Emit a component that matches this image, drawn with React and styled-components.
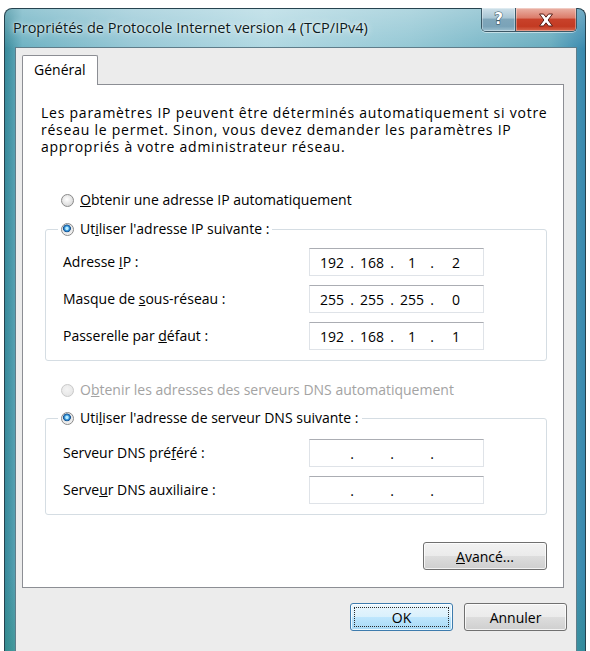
import React from "react";
import styled, { createGlobalStyle } from "styled-components";

const GlobalStyle = createGlobalStyle`
  html, body {
    margin: 0;
    padding: 0;
    background: #ffffff;
  }
  body {
    font-family: "Open Sans", "Noto Sans", sans-serif;
    font-size: 14px;
    color: #000;
  }
`;

const Page = styled.div`
  width: 590px;
  height: 651px;
  box-sizing: border-box;
  padding: 8px 0 0 4px;
  overflow: hidden;
`;

const Window = styled.div`
  width: 582px;
  height: 643px;
  box-sizing: border-box;
  border: 1px solid #26434f;
  border-bottom: none;
  border-radius: 8px 8px 0 0;
  padding: 0 8px 0 10px;
  display: flex;
  flex-direction: column;
  background:
    linear-gradient(180deg, rgba(255, 255, 255, 0.28) 0px, rgba(255, 255, 255, 0.05) 34px, rgba(255, 255, 255, 0) 40px),
    linear-gradient(180deg, rgba(0, 0, 0, 0) 88%, rgba(40, 140, 120, 0.35) 100%),
    linear-gradient(90deg, #388a9b 0%, #6cb1c2 3%, #95c7d5 22%, #b0d8e2 45%, #93c7d4 70%, #66abbe 94%, #3889ae 100%);
`;

const TitleBar = styled.div`
  height: 38px;
  flex: none;
  display: flex;
  justify-content: space-between;
  align-items: flex-start;
`;

const Title = styled.div`
  margin: 9px 0 0 -2px;
  font-size: 14.5px;
  line-height: 19px;
  color: #0b1a20;
  text-shadow: 0 0 6px rgba(255, 255, 255, 0.9), 0 0 2px rgba(255, 255, 255, 0.8);
`;

const CaptionGroup = styled.div`
  display: flex;
  margin-top: -1px;
  height: 23px;
  border: 1px solid #3b5866;
  border-top: none;
  border-radius: 0 0 5px 5px;
  overflow: hidden;
  box-shadow: 0 1px 0 rgba(255, 255, 255, 0.5);
`;

const CaptionButton = styled.div`
  width: ${(p) => p.$w}px;
  display: flex;
  align-items: center;
  justify-content: center;
  box-shadow: inset 0 0 0 1px rgba(255, 255, 255, 0.35);
  background: ${(p) =>
    p.$close
      ? "linear-gradient(180deg, #eab2a6 0%, #dc7d6b 42%, #c8412a 50%, #c33a22 80%, #d8664c 100%)"
      : "linear-gradient(180deg, #cfe1ea 0%, #a9c6d4 42%, #7fa6ba 50%, #7aa3b8 80%, #9dc0d0 100%)"};
  & + & {
    border-left: 1px solid #3b5866;
  }
`;

const HelpGlyph = styled.span`
  font-family: "DejaVu Sans", sans-serif;
  font-weight: bold;
  font-size: 15px;
  line-height: 1;
  color: #ffffff;
  -webkit-text-stroke: 1px #2e4a58;
  paint-order: stroke fill;
`;

const Content = styled.div`
  flex: 1;
  box-sizing: border-box;
  background: #ececec;
  border: 1px solid #5f7d8a;
  border-bottom: none;
  padding: 7px 12px 0 6px;
  display: flex;
  flex-direction: column;
`;

const TabStrip = styled.div`
  display: flex;
  position: relative;
  z-index: 1;
  margin-bottom: -1px;
`;

const Tab = styled.div`
  width: 76px;
  height: 30px;
  box-sizing: border-box;
  background: #ffffff;
  border: 1px solid #8c8e94;
  border-bottom: none;
  border-radius: 2px 2px 0 0;
  padding: 5px 0 0 11px;
  font-size: 14px;
  line-height: 18px;
`;

const Panel = styled.div`
  height: 504px;
  box-sizing: border-box;
  background: #ffffff;
  border: 1px solid #8c8e94;
  padding: 19px 16px 0 0;
  display: flex;
  flex-direction: column;
`;

const Intro = styled.p`
  margin: 0 0 0 18px;
  font-size: 14px;
  letter-spacing: 0.76px;
  line-height: 17px;
  white-space: nowrap;
`;

const RadioRow = styled.label`
  display: flex;
  align-items: center;
  gap: 6px;
  height: 20px;
  margin: ${(p) => p.$m || "0"};
  padding: 0 3px;
  line-height: 20px;
  color: ${(p) => (p.$disabled ? "#a3a3a3" : "#000")};
`;

const RadioDot = styled.span`
  width: 13px;
  height: 13px;
  box-sizing: border-box;
  border-radius: 50%;
  flex: none;
  border: 1px solid ${(p) => (p.$disabled ? "#c9c9c9" : "#8a8a8a")};
  background: ${(p) =>
    p.$checked
      ? "radial-gradient(circle at 45% 40%, #b8ecff 0 1.2px, #3a9be0 2.2px, #14508e 3.6px, #e8e8e8 4.2px, #f8f8f8 100%)"
      : p.$disabled
      ? "radial-gradient(circle at 45% 40%, #f4f4f4 0, #e2e2e2 100%)"
      : "radial-gradient(circle at 45% 40%, #ffffff 0, #dcdcdc 70%, #cfcfcf 100%)"};
`;

const Group = styled.fieldset`
  margin: ${(p) => p.$top}px 0 0 22px;
  width: 502px;
  box-sizing: border-box;
  border: 1px solid #d5dde3;
  border-radius: 3px;
  padding: ${(p) => p.$pad};
  min-inline-size: 0;
`;

const Legend = styled.legend`
  margin-left: 12px;
  padding: 0;
`;

const FieldGrid = styled.div`
  display: grid;
  grid-template-columns: 246px 175px;
  row-gap: 9px;
  align-items: center;
  margin-left: 17px;
`;

const FieldLabel = styled.span`
  line-height: 18px;
`;

const IpBox = styled.div`
  height: 28px;
  box-sizing: border-box;
  border: 1px solid #dfe3e8;
  border-top-color: #abadb3;
  background: #ffffff;
  display: flex;
  align-items: center;
  padding-left: 6px;
  font-size: 14px;
`;

const Octet = styled.span`
  width: ${(p) => (p.$last ? 40 : 32)}px;
  text-align: center;
`;

const Dot = styled.span`
  width: 8px;
  text-align: center;
`;

const ButtonRow = styled.div`
  display: flex;
  justify-content: flex-end;
  gap: 11px;
  margin: ${(p) => p.$m};
`;

const Button = styled.div`
  width: ${(p) => p.$w}px;
  height: 28px;
  box-sizing: border-box;
  border: 1px solid ${(p) => (p.$default ? "#3d7bad" : "#707070")};
  border-radius: 3px;
  display: flex;
  align-items: center;
  justify-content: center;
  font-size: 14px;
  background: ${(p) =>
    p.$default
      ? "linear-gradient(180deg, #eaf6fd 0%, #d9f0fc 50%, #bee6fd 51%, #a7d9f5 100%)"
      : "linear-gradient(180deg, #f2f2f2 0%, #ebebeb 50%, #dddddd 51%, #cfcfcf 100%)"};
  box-shadow: inset 0 0 0 1px rgba(255, 255, 255, 0.75);
`;

const FocusRing = styled.span`
  width: calc(100% - 6px);
  height: calc(100% - 6px);
  box-sizing: border-box;
  border: 1px dotted #2a2a2a;
  display: flex;
  align-items: center;
  justify-content: center;
`;

function Ip({ parts }) {
  return (
    <IpBox>
      <Octet>{parts[0]}</Octet>
      <Dot>.</Dot>
      <Octet>{parts[1]}</Octet>
      <Dot>.</Dot>
      <Octet>{parts[2]}</Octet>
      <Dot>.</Dot>
      <Octet $last>{parts[3]}</Octet>
    </IpBox>
  );
}

function CloseIcon() {
  return (
    <svg width="16" height="14" viewBox="0 0 16 14">
      <path
        d="M1.5 1h4l2.5 3.2L10.5 1h4l-4.4 6 4.4 6h-4L8 9.8 5.5 13h-4l4.4-6z"
        fill="#ffffff"
        stroke="#5a1f16"
        strokeWidth="1"
        strokeLinejoin="round"
      />
    </svg>
  );
}

export default function App() {
  return (
    <>
      <GlobalStyle />
      <Page>
        <Window>
          <TitleBar>
            <Title>Propriétés de Protocole Internet version 4 (TCP/IPv4)</Title>
            <CaptionGroup>
              <CaptionButton $w={33}>
                <HelpGlyph>?</HelpGlyph>
              </CaptionButton>
              <CaptionButton $w={60} $close>
                <CloseIcon />
              </CaptionButton>
            </CaptionGroup>
          </TitleBar>
          <Content>
            <TabStrip>
              <Tab>Général</Tab>
            </TabStrip>
            <Panel>
              <Intro>
                Les paramètres IP peuvent être déterminés automatiquement si votre
                <br />
                réseau le permet. Sinon, vous devez demander les paramètres IP
                <br />
                appropriés à votre administrateur réseau.
              </Intro>

              <RadioRow $m="35px 0 0 35px">
                <RadioDot />
                <span>
                  <u>O</u>btenir une adresse IP automatiquement
                </span>
              </RadioRow>

              <Group $top={9} $pad="9px 0 10px 0">
                <Legend>
                  <RadioRow>
                    <RadioDot $checked />
                    <span>
                      Ut<u>i</u>liser l'adresse IP suivante :
                    </span>
                  </RadioRow>
                </Legend>
                <FieldGrid>
                  <FieldLabel>
                    Adresse <u>I</u>P :
                  </FieldLabel>
                  <Ip parts={["192", "168", "1", "2"]} />
                  <FieldLabel>
                    Masque de <u>s</u>ous-réseau :
                  </FieldLabel>
                  <Ip parts={["255", "255", "255", "0"]} />
                  <FieldLabel>
                    Passerelle par <u>d</u>éfaut :
                  </FieldLabel>
                  <Ip parts={["192", "168", "1", "1"]} />
                </FieldGrid>
              </Group>

              <RadioRow $m="19px 0 0 35px" $disabled>
                <RadioDot $disabled />
                <span>
                  O<u>b</u>tenir les adresses des serveurs DNS automatiquement
                </span>
              </RadioRow>

              <Group $top={8} $pad="11px 0 10px 0">
                <Legend>
                  <RadioRow>
                    <RadioDot $checked />
                    <span>
                      Uti<u>l</u>iser l'adresse de serveur DNS suivante :
                    </span>
                  </RadioRow>
                </Legend>
                <FieldGrid>
                  <FieldLabel>
                    Serveur DNS pré<u>f</u>éré :
                  </FieldLabel>
                  <Ip parts={["", "", "", ""]} />
                  <FieldLabel>
                    Serve<u>u</u>r DNS auxiliaire :
                  </FieldLabel>
                  <Ip parts={["", "", "", ""]} />
                </FieldGrid>
              </Group>

              <ButtonRow $m="27px 0 0 0">
                <Button $w={124}>
                  <span>
                    <u>A</u>vancé...
                  </span>
                </Button>
              </ButtonRow>
            </Panel>
            <ButtonRow $m="15px -3px 0 0">
              <Button $w={103} $default>
                <FocusRing>OK</FocusRing>
              </Button>
              <Button $w={103}>Annuler</Button>
            </ButtonRow>
          </Content>
        </Window>
      </Page>
    </>
  );
}
